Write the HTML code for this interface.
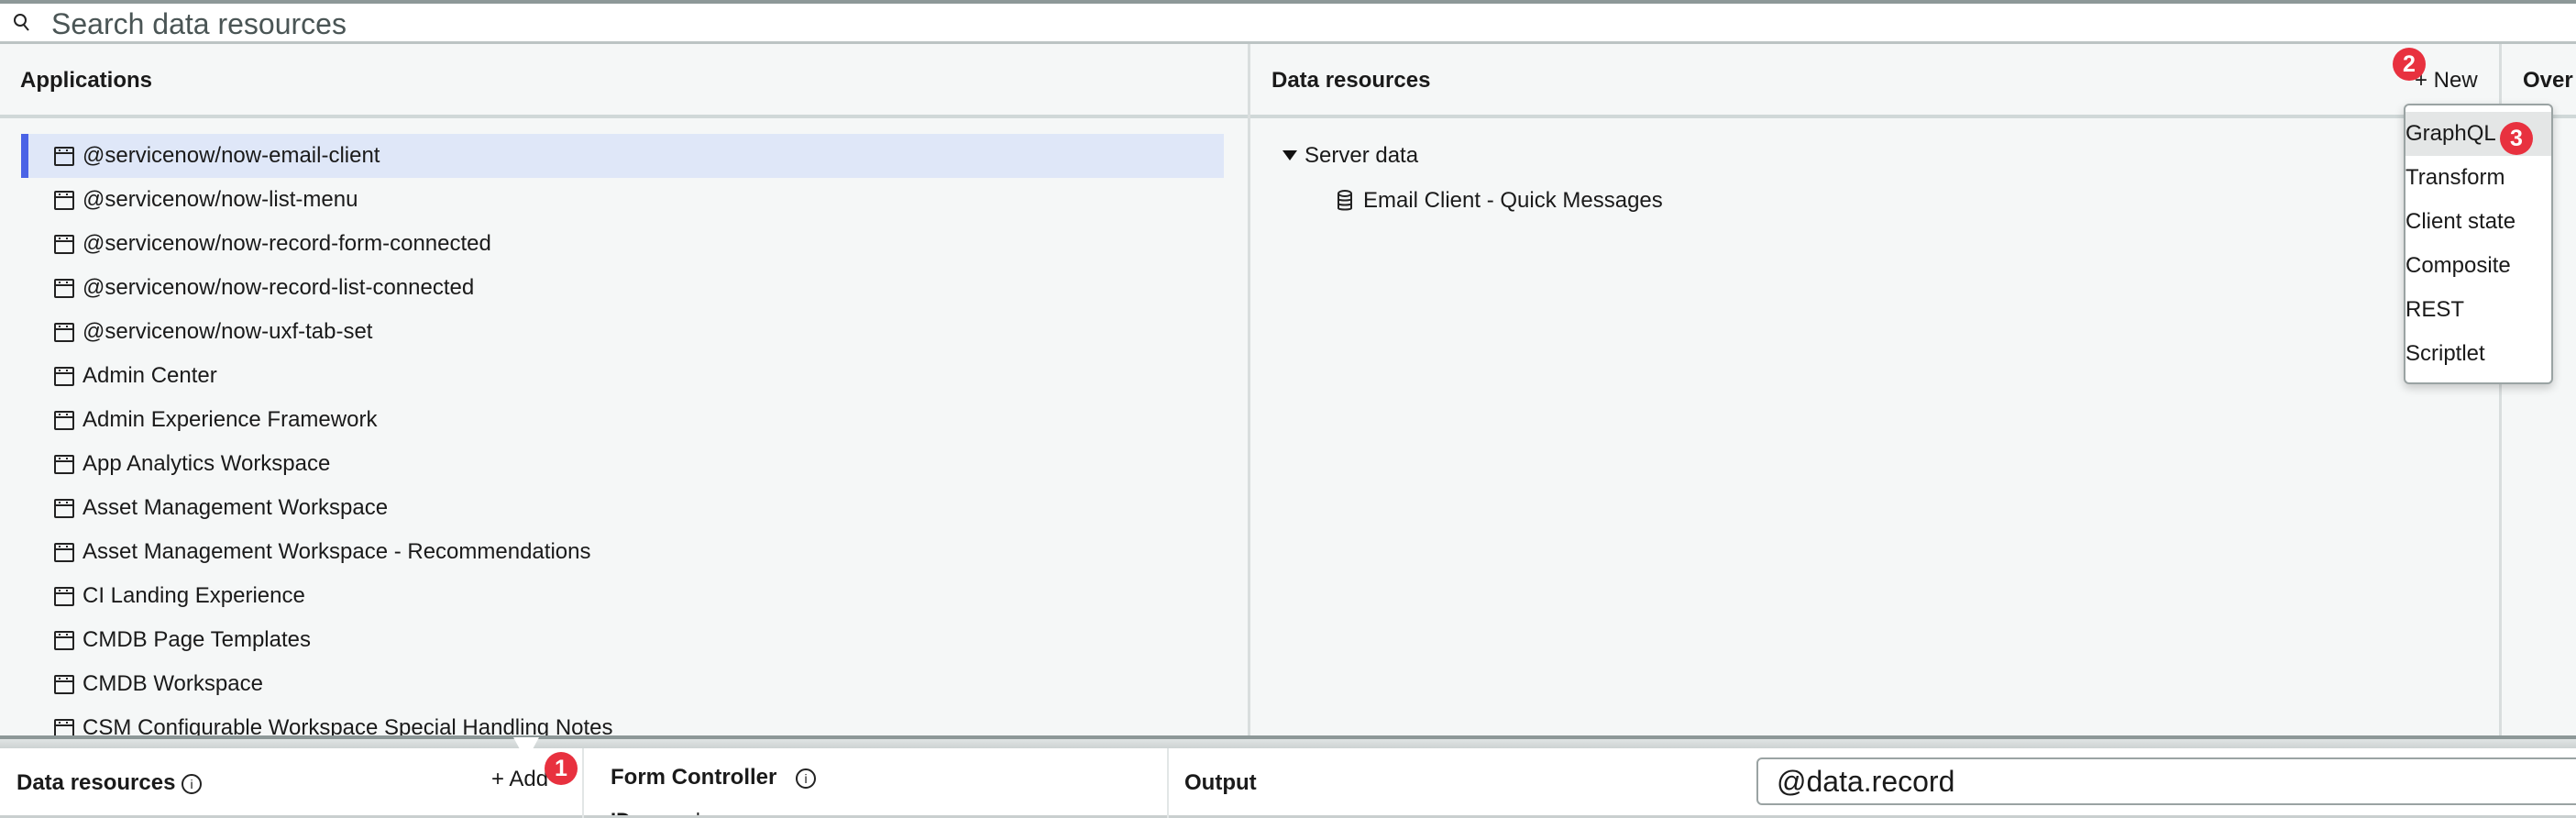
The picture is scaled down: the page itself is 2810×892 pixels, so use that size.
<!DOCTYPE html>
<html><head><meta charset="utf-8"><style>
*{box-sizing:border-box;margin:0;padding:0}
body{width:2810px;height:892px;overflow:hidden;background:#f5f7f7;font-family:"Liberation Sans",sans-serif;color:#1a1a1a;position:relative}
.abs{position:absolute;white-space:nowrap}
.badge{position:absolute;width:36px;height:36px;border-radius:50%;background:#e8313f;color:#fff;font-weight:bold;font-size:25px;line-height:36px;text-align:center}
.row{position:absolute;left:23px;width:1312px;height:48px;font-size:24px;line-height:48px;padding-left:36px}
.ico{position:absolute;left:36px;top:14px;width:22px;height:21px;border:2.5px solid #222;border-radius:2px}
.ico:before{content:"";position:absolute;left:0;right:0;top:4px;border-top:2.5px solid #222}
.ico:after{content:"";position:absolute;left:3px;top:0.5px;width:6px;height:2px;border-left:2px solid #222;border-right:2px solid #222}
.row span{margin-left:31px}
.mi{position:absolute;left:2622px;width:163px;height:48px;font-size:24px;line-height:48px;padding-left:2px}
</style></head><body>
<div class="abs" style="left:0;top:0;width:2810px;height:4px;background:#8d9898"></div>
<div class="abs" style="left:0;top:4px;width:2810px;height:44px;background:#fff;border-bottom:3px solid #bcc4c4"></div>
<svg class="abs" style="left:14px;top:14px" width="20" height="22" viewBox="0 0 20 22"><circle cx="8" cy="8" r="6" fill="none" stroke="#222" stroke-width="2"/><path d="M12 13l5 6" stroke="#222" stroke-width="2"/></svg>
<div class="abs" style="left:56px;top:8px;font-size:32px;color:#4a5555">Search data resources</div>
<div class="abs" style="left:0;top:125px;width:2810px;height:4px;background:#d0d8d8"></div>
<div class="abs" style="left:1361px;top:48px;width:3px;height:755px;background:#d9dede"></div>
<div class="abs" style="left:2726px;top:48px;width:3px;height:755px;background:#d9dede"></div>
<div class="abs" style="left:22px;top:74px;font-size:24px;font-weight:bold">Applications</div>
<div class="abs" style="left:1387px;top:74px;font-size:24px;font-weight:bold">Data resources</div>
<div class="abs" style="left:2634px;top:74px;font-size:24px">+ New</div>
<div class="abs" style="left:2752px;top:74px;font-size:24px;font-weight:bold">Over</div>
<div class="abs" style="left:23px;top:146px;width:1312px;height:48px;background:#dfe7f8;border-left:8px solid #4a63e6"></div>
<div class="row" style="top:146px"><i class="ico"></i><span>@servicenow/now-email-client</span></div>
<div class="row" style="top:194px"><i class="ico"></i><span>@servicenow/now-list-menu</span></div>
<div class="row" style="top:242px"><i class="ico"></i><span>@servicenow/now-record-form-connected</span></div>
<div class="row" style="top:290px"><i class="ico"></i><span>@servicenow/now-record-list-connected</span></div>
<div class="row" style="top:338px"><i class="ico"></i><span>@servicenow/now-uxf-tab-set</span></div>
<div class="row" style="top:386px"><i class="ico"></i><span>Admin Center</span></div>
<div class="row" style="top:434px"><i class="ico"></i><span>Admin Experience Framework</span></div>
<div class="row" style="top:482px"><i class="ico"></i><span>App Analytics Workspace</span></div>
<div class="row" style="top:530px"><i class="ico"></i><span>Asset Management Workspace</span></div>
<div class="row" style="top:578px"><i class="ico"></i><span>Asset Management Workspace - Recommendations</span></div>
<div class="row" style="top:626px"><i class="ico"></i><span>CI Landing Experience</span></div>
<div class="row" style="top:674px"><i class="ico"></i><span>CMDB Page Templates</span></div>
<div class="row" style="top:722px"><i class="ico"></i><span>CMDB Workspace</span></div>
<div class="row" style="top:770px"><i class="ico"></i><span>CSM Configurable Workspace Special Handling Notes</span></div>
<div class="abs" style="left:1399px;top:164px;width:0;height:0;border-left:8px solid transparent;border-right:8px solid transparent;border-top:11px solid #111"></div>
<div class="abs" style="left:1423px;top:156px;font-size:24px">Server data</div>
<svg class="abs" style="left:1458px;top:207px" width="18" height="24" viewBox="0 0 18 24"><g fill="none" stroke="#222" stroke-width="2"><ellipse cx="9" cy="4" rx="7" ry="3"/><path d="M2 4v16c0 2 14 2 14 0V4M2 10c0 2 14 2 14 0M2 15c0 2 14 2 14 0"/></g></svg>
<div class="abs" style="left:1487px;top:205px;font-size:24px">Email Client - Quick Messages</div>
<div class="abs" style="left:2622px;top:113px;width:163px;height:306px;background:#fff;border:2px solid #9aa3a3;border-radius:6px;box-shadow:0 4px 10px rgba(0,0,0,.2)"></div>
<div class="abs" style="left:2624px;top:122px;width:159px;height:48px;background:#e4e6e6"></div>
<div class="mi" style="top:122px">GraphQL</div>
<div class="mi" style="top:170px">Transform</div>
<div class="mi" style="top:218px">Client state</div>
<div class="mi" style="top:266px">Composite</div>
<div class="mi" style="top:314px">REST</div>
<div class="mi" style="top:362px">Scriptlet</div>
<div class="badge" style="left:2610px;top:52px">2</div>
<div class="badge" style="left:2727px;top:133px">3</div>
<div class="abs" style="left:0;top:802px;width:2810px;height:4px;background:#8d9898"></div>
<div class="abs" style="left:0;top:806px;width:2810px;height:10px;background:linear-gradient(#e0e4e4,#cdd3d3)"></div>
<div class="abs" style="left:0;top:816px;width:2810px;height:76px;background:#fff;overflow:hidden">
<div class="abs" style="left:666px;top:66px;font-size:22px;font-weight:bold">ID: <span style="font-weight:normal">record</span></div>
</div>
<div class="abs" style="left:0;top:889px;width:2810px;height:3px;background:#c9cfcf"></div>
<div class="abs" style="left:560px;top:804px;width:0;height:0;border-left:14px solid transparent;border-right:14px solid transparent;border-top:26px solid #fff"></div>
<div class="abs" style="left:635px;top:816px;width:2px;height:76px;background:#e2e6e6"></div>
<div class="abs" style="left:1273px;top:816px;width:2px;height:76px;background:#e2e6e6"></div>
<div class="abs" style="left:18px;top:840px;font-size:24px;font-weight:bold">Data resources <span style="display:inline-block;width:22px;height:22px;border:2px solid #222;border-radius:50%;font-size:14px;line-height:18px;text-align:center;font-weight:normal;vertical-align:1px">i</span></div>
<div class="abs" style="left:536px;top:836px;font-size:24px">+ Add</div>
<div class="badge" style="left:594px;top:820px">1</div>
<div class="abs" style="left:666px;top:834px;font-size:24px;font-weight:bold">Form Controller <span style="display:inline-block;width:22px;height:22px;border:2px solid #222;border-radius:50%;font-size:14px;line-height:18px;text-align:center;font-weight:normal;margin-left:14px;vertical-align:1px">i</span></div>
<div class="abs" style="left:1292px;top:840px;font-size:24px;font-weight:bold">Output</div>
<div class="abs" style="left:1916px;top:826px;width:900px;height:52px;background:#fff;border:2px solid #9aa3a3;border-radius:6px;font-size:32px;line-height:48px;padding-left:20px">@data.record</div>
</body></html>
